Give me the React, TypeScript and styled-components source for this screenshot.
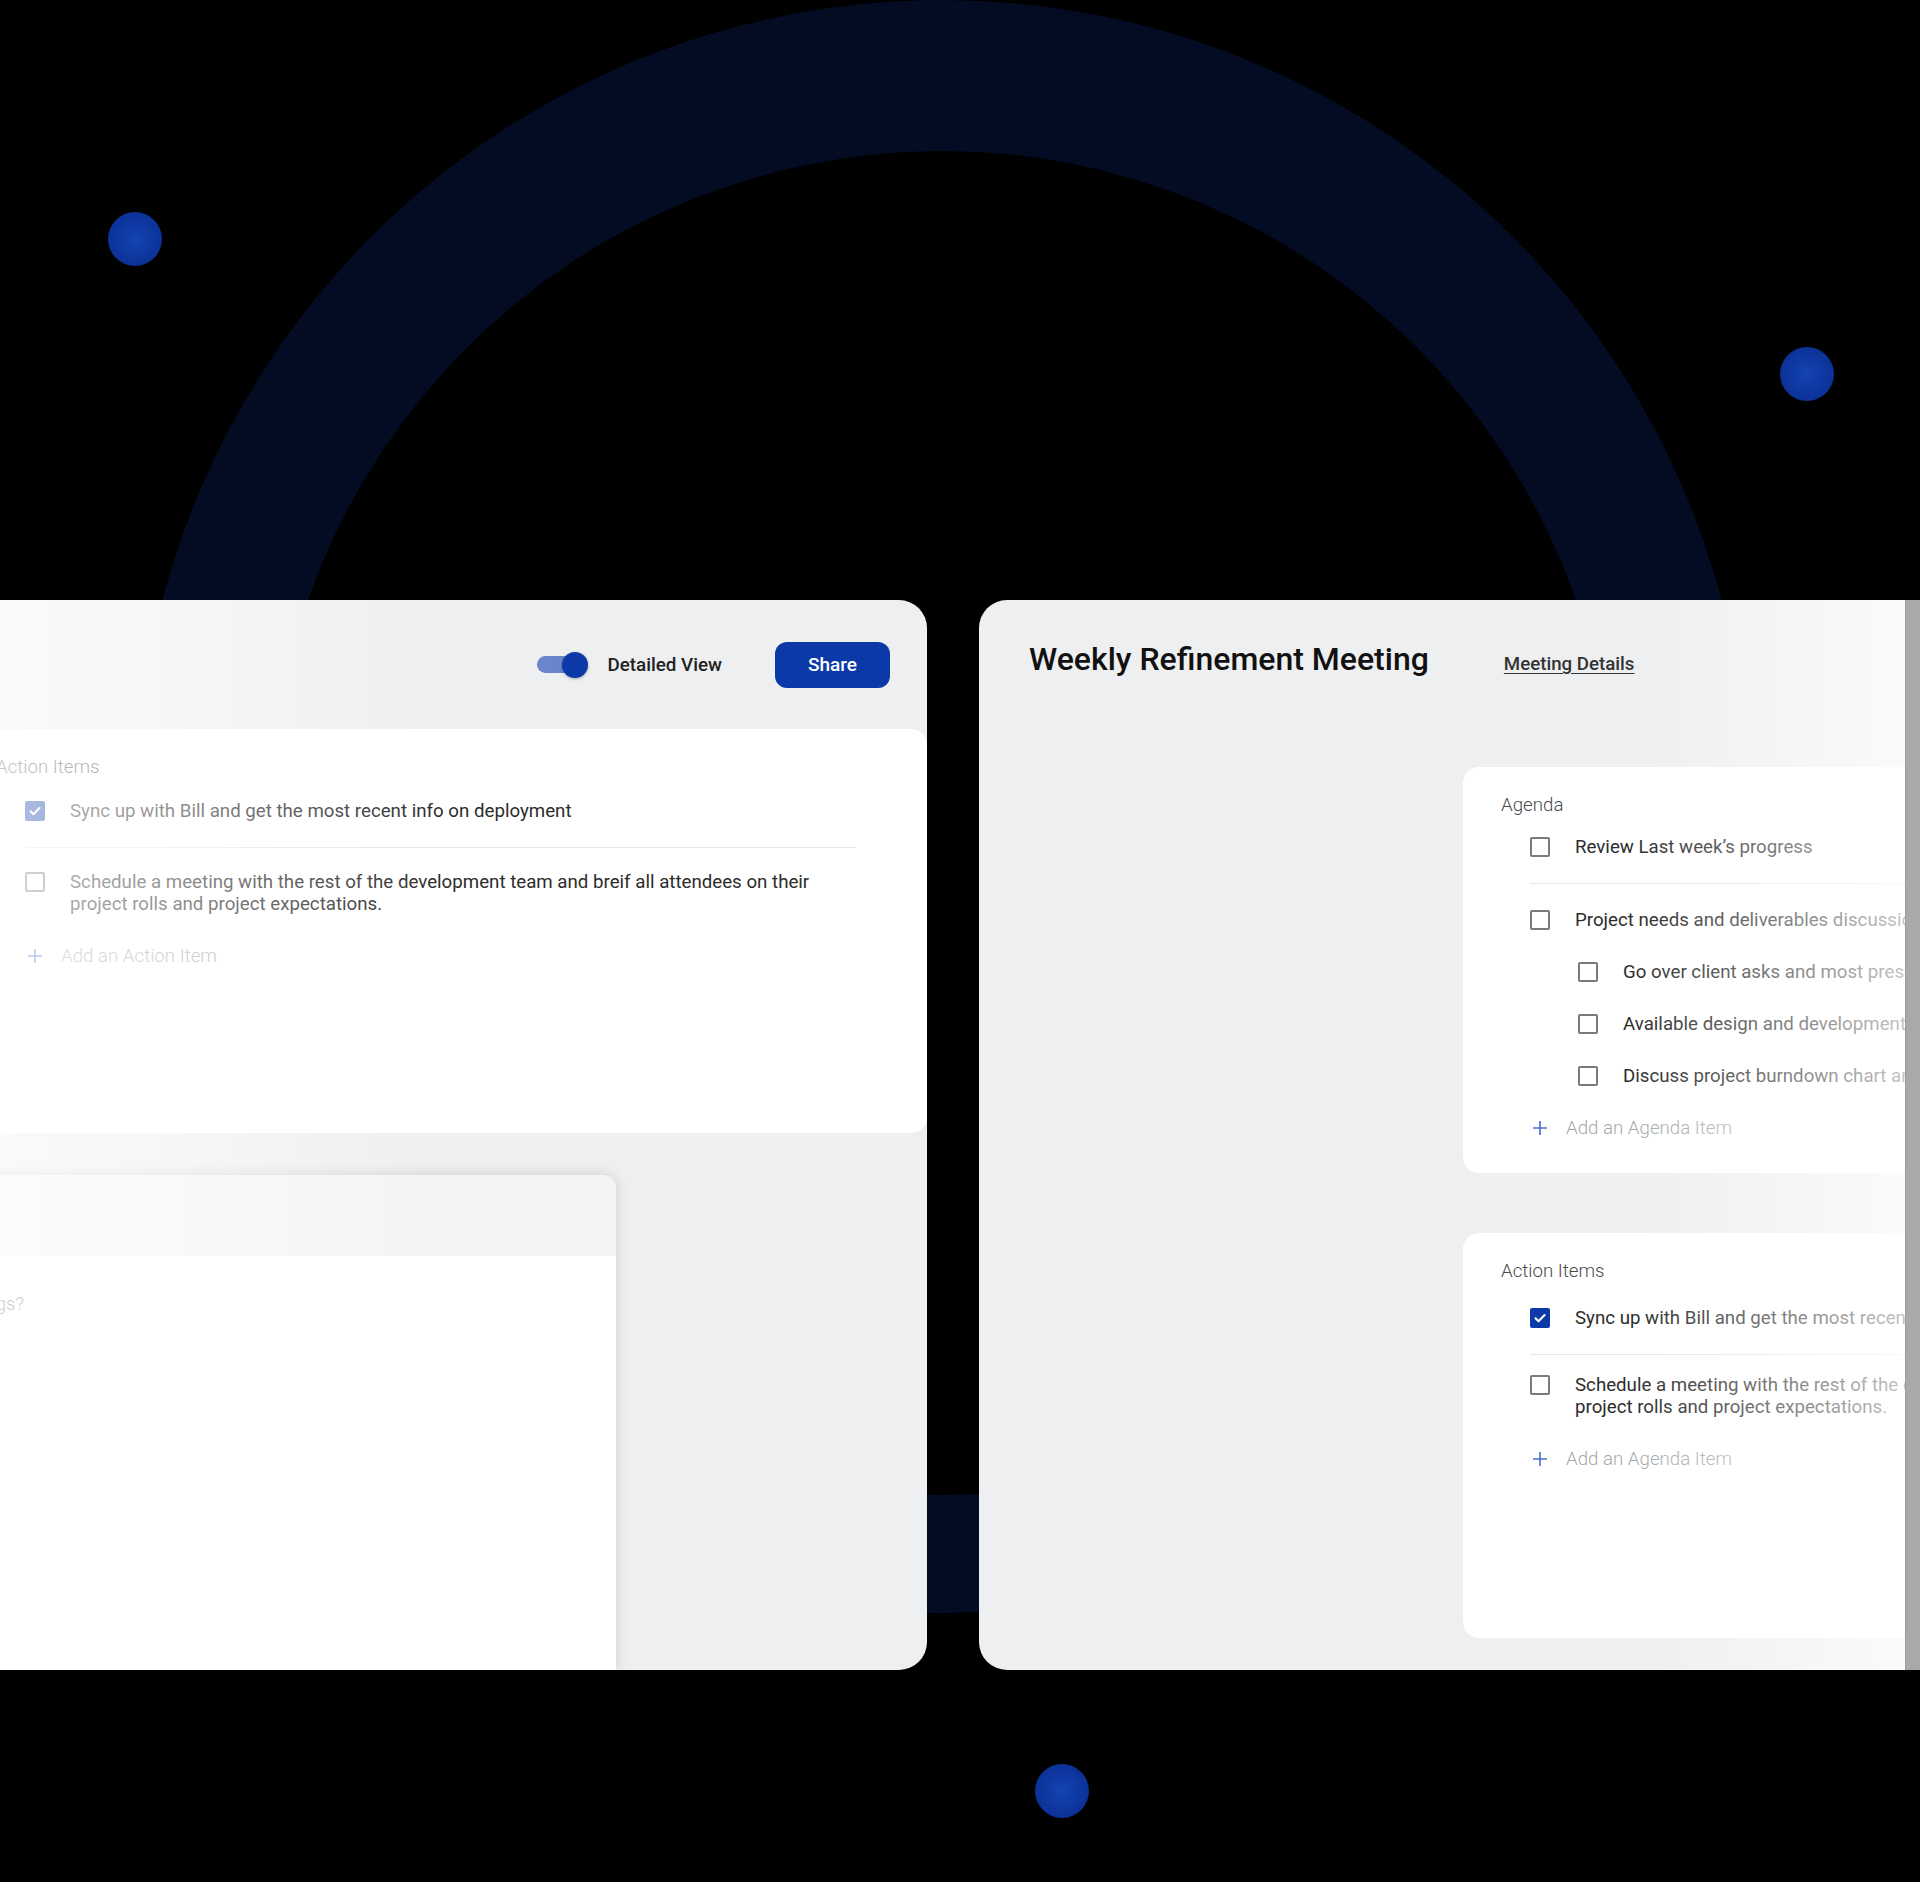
import React from 'react';
import styled, { createGlobalStyle } from 'styled-components';

const GlobalStyle = createGlobalStyle`
  * { box-sizing: border-box; }
  html, body {
    margin: 0;
    padding: 0;
    background: #000;
  }
  body {
    font-family: Roboto, 'Noto Sans', 'Liberation Sans', sans-serif;
    -webkit-font-smoothing: antialiased;
  }
`;

const Page = styled.div`
  position: relative;
  width: 1920px;
  height: 1882px;
  overflow: hidden;
  background: #000;
`;

const Backdrop = styled.svg`
  position: absolute;
  left: 0;
  top: 0;
  width: 1920px;
  height: 1882px;
`;

const Dot = styled.span<{ $x: number; $y: number }>`
  position: absolute;
  left: ${({ $x }) => $x - 27}px;
  top: ${({ $y }) => $y - 27}px;
  width: 54px;
  height: 54px;
  border-radius: 50%;
  background: radial-gradient(circle, #1443b2 0%, #0c3399 65%, #0a2c86 100%);
`;

const Stage = styled.main`
  position: relative;
  display: flex;
  gap: 52px;
  margin-left: -40px;
  padding-top: 600px;
`;

const LeftPanel = styled.section`
  position: relative;
  flex: 0 0 967px;
  height: 1070px;
  display: flex;
  flex-direction: column;
  border-radius: 28px;
  overflow: hidden;
  background: #eeeff1;

  &::after {
    content: '';
    position: absolute;
    inset: 0;
    pointer-events: none;
    background: linear-gradient(
      90deg,
      rgba(255, 255, 255, 0.72) 0px,
      rgba(255, 255, 255, 0.5) 200px,
      rgba(255, 255, 255, 0) 480px
    );
  }
`;

const TopBar = styled.header`
  flex: 0 0 129px;
  display: flex;
  justify-content: flex-end;
  align-items: center;
  padding-right: 37px;
`;

const ViewToggle = styled.label`
  display: flex;
  align-items: center;
  gap: 21px;
  font-size: 18.8px;
  font-weight: 500;
  color: #222;
`;

const Track = styled.span`
  display: flex;
  align-items: center;
  justify-content: flex-end;
  width: 50px;
  height: 17px;
  border-radius: 9px;
  background: #6a85cd;
`;

const Knob = styled.span`
  flex-shrink: 0;
  width: 26px;
  height: 26px;
  margin-right: -1px;
  border-radius: 50%;
  background: #0c39a7;
  box-shadow: 0 1px 3px rgba(0, 0, 0, 0.3);
`;

const ShareButton = styled.button`
  width: 115px;
  height: 46px;
  margin-left: 53px;
  border: none;
  border-radius: 12px;
  background: #0b3aa8;
  color: #fff;
  font-family: inherit;
  font-size: 19px;
  font-weight: 500;
`;

const Card = styled.div<{ $height: number; $padLeft: number; $radius: string }>`
  flex-shrink: 0;
  height: ${({ $height }) => $height}px;
  padding: 27px 0 0 ${({ $padLeft }) => $padLeft}px;
  border-radius: ${({ $radius }) => $radius};
  background: #fff;
`;

const ListTitle = styled.div<{ $gap: number }>`
  margin-bottom: ${({ $gap }) => $gap}px;
  font-size: 18.7px;
  line-height: 22px;
  font-weight: 300;
  color: #4a4a4a;
`;

const List = styled.div<{ $padRight: number }>`
  display: flex;
  flex-direction: column;
  margin-left: 29px;
  padding-right: ${({ $padRight }) => $padRight}px;
`;

const Row = styled.div<{ $indent?: number }>`
  display: flex;
  align-items: flex-start;
  gap: 25px;
  padding: 15px 0 15px ${({ $indent = 0 }) => $indent}px;
`;

const Box = styled.span<{ $checked?: boolean }>`
  flex-shrink: 0;
  display: flex;
  align-items: center;
  justify-content: center;
  width: 20px;
  height: 20px;
  margin-top: 1px;
  border: 2px solid ${({ $checked }) => ($checked ? '#0d3aa9' : '#7a7a7a')};
  border-radius: 2px;
  background: ${({ $checked }) => ($checked ? '#0d3aa9' : '#fff')};
`;

const ItemText = styled.span<{ $wrap?: boolean }>`
  font-size: 18.7px;
  line-height: 22px;
  color: #2c2c2c;
  white-space: ${({ $wrap }) => ($wrap ? 'normal' : 'nowrap')};
  max-width: ${({ $wrap }) => ($wrap ? '750px' : 'none')};
`;

const Divider = styled.hr<{ $after: number }>`
  height: 1px;
  margin: 10px 0 ${({ $after }) => $after}px;
  border: none;
  background: #e6e6e6;
`;

const AddRow = styled.div`
  display: flex;
  align-items: center;
  gap: 18px;
  padding: 15px 0 15px 2px;
  font-size: 18.7px;
  line-height: 22px;
  font-weight: 300;
  color: #a8a8a8;
  white-space: nowrap;
`;

const LowerCard = styled.div`
  flex: 1;
  align-self: flex-start;
  width: 1256px;
  margin: 42px 0 0 -600px;
  display: flex;
  flex-direction: column;
  border-radius: 0 14px 0 0;
  background: #fff;
  box-shadow: 0 0 14px rgba(0, 0, 0, 0.14);
`;

const LowerHeader = styled.div`
  flex: 0 0 81px;
  border-radius: 0 14px 0 0;
  background: #f4f4f5;
`;

const LowerBody = styled.div`
  display: flex;
  justify-content: flex-end;
  padding: 37px 592px 0 0;
  font-size: 18.7px;
  line-height: 22px;
  font-weight: 300;
  color: #666;
  white-space: nowrap;
`;

const RightPanel = styled.section`
  flex: 0 0 941px;
  height: 1070px;
  display: flex;
  border-radius: 28px 0 0 28px;
  overflow: hidden;
  background: #eeeff1;
`;

const RightMain = styled.div`
  position: relative;
  flex: 1;
  overflow: hidden;
  padding: 39px 0 0 50px;

  &::after {
    content: '';
    position: absolute;
    inset: 0;
    pointer-events: none;
    background: linear-gradient(
      90deg,
      rgba(255, 255, 255, 0) 0%,
      rgba(255, 255, 255, 0) 70%,
      rgba(255, 255, 255, 0.72) 100%
    );
  }
`;

const ScrollStrip = styled.div`
  flex: 0 0 15px;
  background: #a9a9a9;
  box-shadow: inset 1px 0 0 #9c9c9c;
`;

const MeetingHeader = styled.div`
  display: flex;
  align-items: baseline;
  gap: 75px;
`;

const Title = styled.h1`
  margin: 0;
  font-size: 32px;
  line-height: 40px;
  font-weight: 500;
  color: #111;
  white-space: nowrap;
`;

const DetailsLink = styled.a`
  font-size: 18.7px;
  font-weight: 500;
  color: #333;
  text-decoration: underline;
  text-underline-offset: 3px;
  white-space: nowrap;
`;

const CardStack = styled.div`
  display: flex;
  flex-direction: column;
  gap: 60px;
  width: 960px;
  margin: 88px 0 0 434px;
`;

function CheckBox({ checked }: { checked?: boolean }) {
  return (
    <Box $checked={checked}>
      {checked && (
        <svg width='14' height='14' viewBox='0 0 14 14'>
          <path d='M2.5 7.3l3 3L11.6 4' fill='none' stroke='#fff' strokeWidth='2' strokeLinecap='round' strokeLinejoin='round' />
        </svg>
      )}
    </Box>
  );
}

function AddItem({ label }: { label: string }) {
  return (
    <AddRow>
      <svg width='16' height='16' viewBox='0 0 16 16'>
        <path d='M8 1v14M1 8h14' stroke='#4a6fd0' strokeWidth='1.6' />
      </svg>
      <span>{label}</span>
    </AddRow>
  );
}

function ActionList({ padRight, addLabel, after }: { padRight: number; addLabel: string; after: number }) {
  return (
    <List $padRight={padRight}>
      <Row>
        <CheckBox checked />
        <ItemText>Sync up with Bill and get the most recent info on deployment</ItemText>
      </Row>
      <Divider $after={after} />
      <Row>
        <CheckBox />
        <ItemText $wrap>
          Schedule a meeting with the rest of the development team and breif all attendees on their
          project rolls and project expectations.
        </ItemText>
      </Row>
      <AddItem label={addLabel} />
    </List>
  );
}

const subItems = [
  'Go over client asks and most pressing issues',
  'Available design and development resources',
  'Discuss project burndown chart and timeline',
];

export default function App() {
  return (
    <Page>
      <GlobalStyle />
      <Backdrop viewBox='0 0 1920 1882'>
        <path
          fillRule='evenodd'
          fill='#030c23'
          d='M135.5 806.5a806.5 806.5 0 1 0 1613 0a806.5 806.5 0 1 0 -1613 0Z M270 823a672 672 0 1 0 1344 0a672 672 0 1 0 -1344 0Z'
        />
      </Backdrop>
      <Dot $x={135} $y={239} />
      <Dot $x={1807} $y={374} />
      <Dot $x={1062} $y={1791} />

      <Stage>
        <LeftPanel>
          <TopBar>
            <ViewToggle>
              <Track>
                <Knob />
              </Track>
              Detailed View
            </ViewToggle>
            <ShareButton>Share</ShareButton>
          </TopBar>
          <Card $height={404} $padLeft={36} $radius='0 16px 16px 0'>
            <ListTitle $gap={7}>Action Items</ListTitle>
            <ActionList padRight={71} addLabel='Add an Action Item' after={8} />
          </Card>
          <LowerCard>
            <LowerHeader />
            <LowerBody>Any other topics to cover in upcoming meetings?</LowerBody>
          </LowerCard>
        </LeftPanel>

        <RightPanel>
          <RightMain>
            <MeetingHeader>
              <Title>Weekly Refinement Meeting</Title>
              <DetailsLink>Meeting Details</DetailsLink>
            </MeetingHeader>
            <CardStack>
              <Card $height={406} $padLeft={38} $radius='16px'>
                <ListTitle $gap={5}>Agenda</ListTitle>
                <List $padRight={0}>
                  <Row>
                    <CheckBox />
                    <ItemText>Review Last week’s progress</ItemText>
                  </Row>
                  <Divider $after={10} />
                  <Row>
                    <CheckBox />
                    <ItemText>Project needs and deliverables discussion</ItemText>
                  </Row>
                  {subItems.map((text) => (
                    <Row key={text} $indent={48}>
                      <CheckBox />
                      <ItemText>{text}</ItemText>
                    </Row>
                  ))}
                  <AddItem label='Add an Agenda Item' />
                </List>
              </Card>
              <Card $height={405} $padLeft={38} $radius='16px'>
                <ListTitle $gap={10}>Action Items</ListTitle>
                <ActionList padRight={0} addLabel='Add an Agenda Item' after={4} />
              </Card>
            </CardStack>
          </RightMain>
          <ScrollStrip />
        </RightPanel>
      </Stage>
    </Page>
  );
}
